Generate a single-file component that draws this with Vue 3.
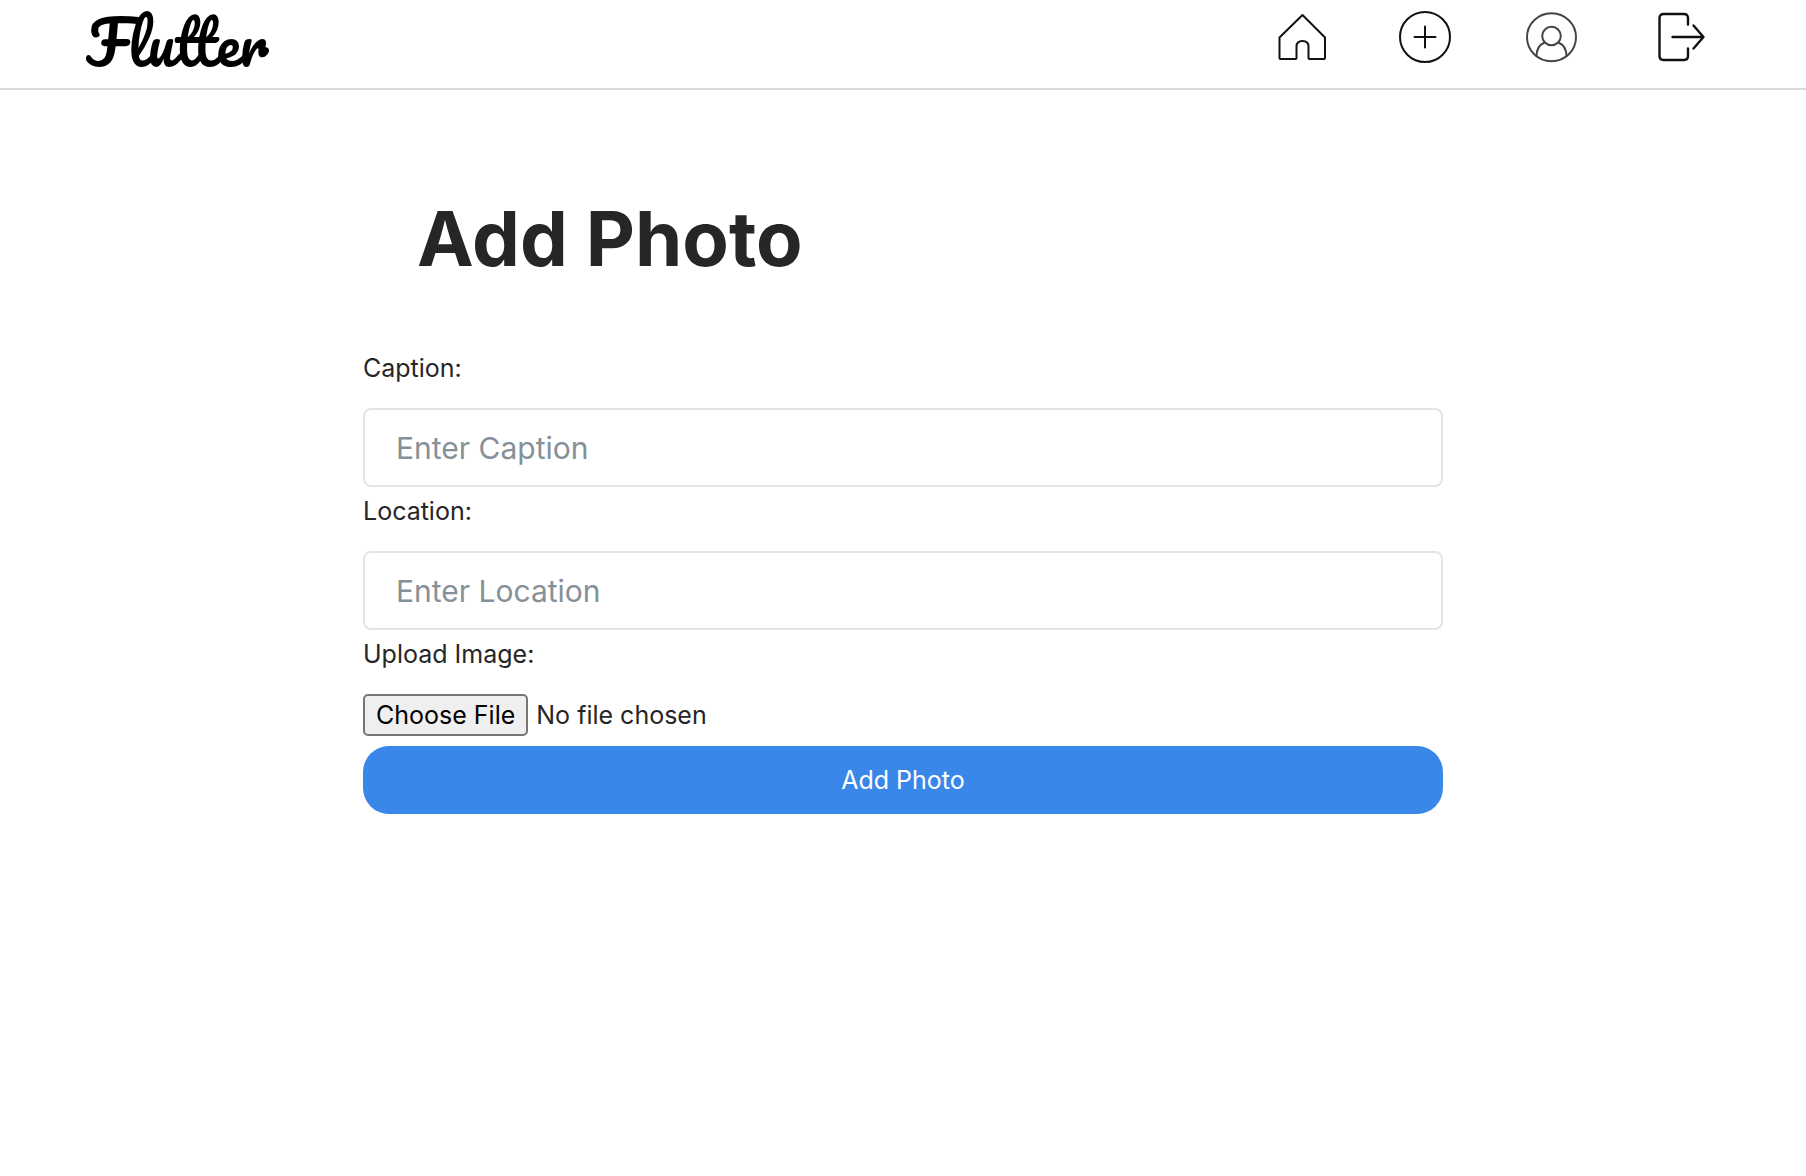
<script setup>
import { ref } from 'vue'

const caption = ref('')
const location = ref('')
</script>

<template>
  <div class="page">
    <header class="header">
      <a class="logo" href="#">Flutter</a>
      <nav class="nav" aria-label="Main">
        <a href="#" aria-label="Home">
          <svg width="48" height="54" viewBox="0 0 48 54" stroke-width="2">
            <path d="M24.500 5 L1.500 27.500 V48 Q1.500 49 2.500 49 H17.500 Q18.500 49 18.500 48 V36.500 Q18.500 31 24.500 31 Q30.500 31 30.500 36.500 V48 Q30.500 49 31.500 49 H46 Q47 49 47 48 V27.500 Z" />
          </svg>
        </a>
        <a href="#" aria-label="Add photo">
          <svg width="54" height="54" viewBox="0 0 54 54" stroke-width="2">
            <circle cx="26" cy="27" r="25" />
            <path d="M26 16.500 V37.500 M15.500 27 H36.500" />
          </svg>
        </a>
        <a class="profile" href="#" aria-label="Profile">
          <svg width="52" height="54" viewBox="0 0 52 54" stroke-width="2">
            <ellipse cx="25.500" cy="27.300" rx="24.500" ry="24" />
            <circle cx="25.500" cy="26" r="9.300" />
            <path d="M10.500 46 C10.500 39 13 35 18.500 32.500 M32.500 32.500 C38 35 40.500 39 40.500 46" />
          </svg>
        </a>
        <a href="#" aria-label="Log out">
          <svg width="60" height="54" viewBox="0 0 60 54" stroke-width="2.400">
            <path d="M37 14.500 V8 Q37 4 33 4 H12.500 Q8.500 4 8.500 8 V46 Q8.500 50 12.500 50 H33 Q37 50 37 46 V38.500" />
            <path d="M21.500 27 H52 M42.500 15.500 L52.500 27 L42.500 38.500" />
          </svg>
        </a>
      </nav>
    </header>

    <main class="content">
      <h1 class="title">Add Photo</h1>
      <form @submit.prevent>
        <label class="label" for="caption">Caption:</label>
        <input id="caption" v-model="caption" class="field" type="text" placeholder="Enter Caption" />
        <label class="label" for="location">Location:</label>
        <input id="location" v-model="location" class="field" type="text" placeholder="Enter Location" />
        <label class="label" for="image">Upload Image:</label>
        <input id="image" class="file" type="file" />
        <button class="submit" type="submit">Add Photo</button>
      </form>
    </main>
  </div>
</template>

<style>
body {
  margin: 0;
  background: #fff;
}
</style>

<style scoped>
.page {
  color: #262626;
  font-family: Inter, "Liberation Sans", sans-serif;
  font-size: 25px;
}

.header {
  display: flex;
  align-items: flex-start;
  justify-content: space-between;
  box-sizing: border-box;
  height: 90px;
  padding: 10px 95px 0 86px;
  border-bottom: 2px solid #dbdbdb;
}

.logo {
  color: #000;
  font-family: Pacifico, Lobster, Lato, cursive;
  font-size: 59px;
  font-weight: 400;
  line-height: 64px;
  text-decoration: none;
}

.nav {
  display: flex;
  gap: 73px;
}

.nav a {
  color: #111;
}

.nav .profile {
  color: #444;
}

.nav svg {
  display: block;
  fill: none;
  stroke: currentColor;
  stroke-linecap: round;
  stroke-linejoin: round;
}

.content {
  max-width: 1080px;
  margin: 0 auto;
}

.title {
  margin: 0;
  padding: 100px 54px 58px;
  font-size: 76px;
  font-weight: 700;
  line-height: 96px;
}

.label {
  display: block;
  margin-bottom: 16px;
  line-height: 48px;
}

.field {
  display: block;
  box-sizing: border-box;
  width: 100%;
  height: 79px;
  padding: 0 31px;
  border: 2px solid #e4e4e4;
  border-radius: 8px;
  background: #fff;
  color: #262626;
  font-family: inherit;
  font-size: 30px;
}

.field::placeholder {
  color: #869098;
  opacity: 1;
}

.file {
  display: block;
  width: 100%;
  height: 42px;
  margin-bottom: 10px;
  color: #262626;
  font-family: inherit;
  font-size: 25px;
}

.file::file-selector-button {
  box-sizing: border-box;
  height: 42px;
  margin: 0 8px 0 0;
  padding: 0 11px;
  border: 2px solid #767676;
  border-radius: 5px;
  background: #efefef;
  color: #000;
  font-family: inherit;
  font-size: 25px;
}

.submit {
  display: block;
  width: 100%;
  height: 68px;
  padding: 0;
  border: 0;
  border-radius: 26px;
  background: #3988e9;
  color: #fff;
  font-family: inherit;
  font-size: 25px;
}
</style>
